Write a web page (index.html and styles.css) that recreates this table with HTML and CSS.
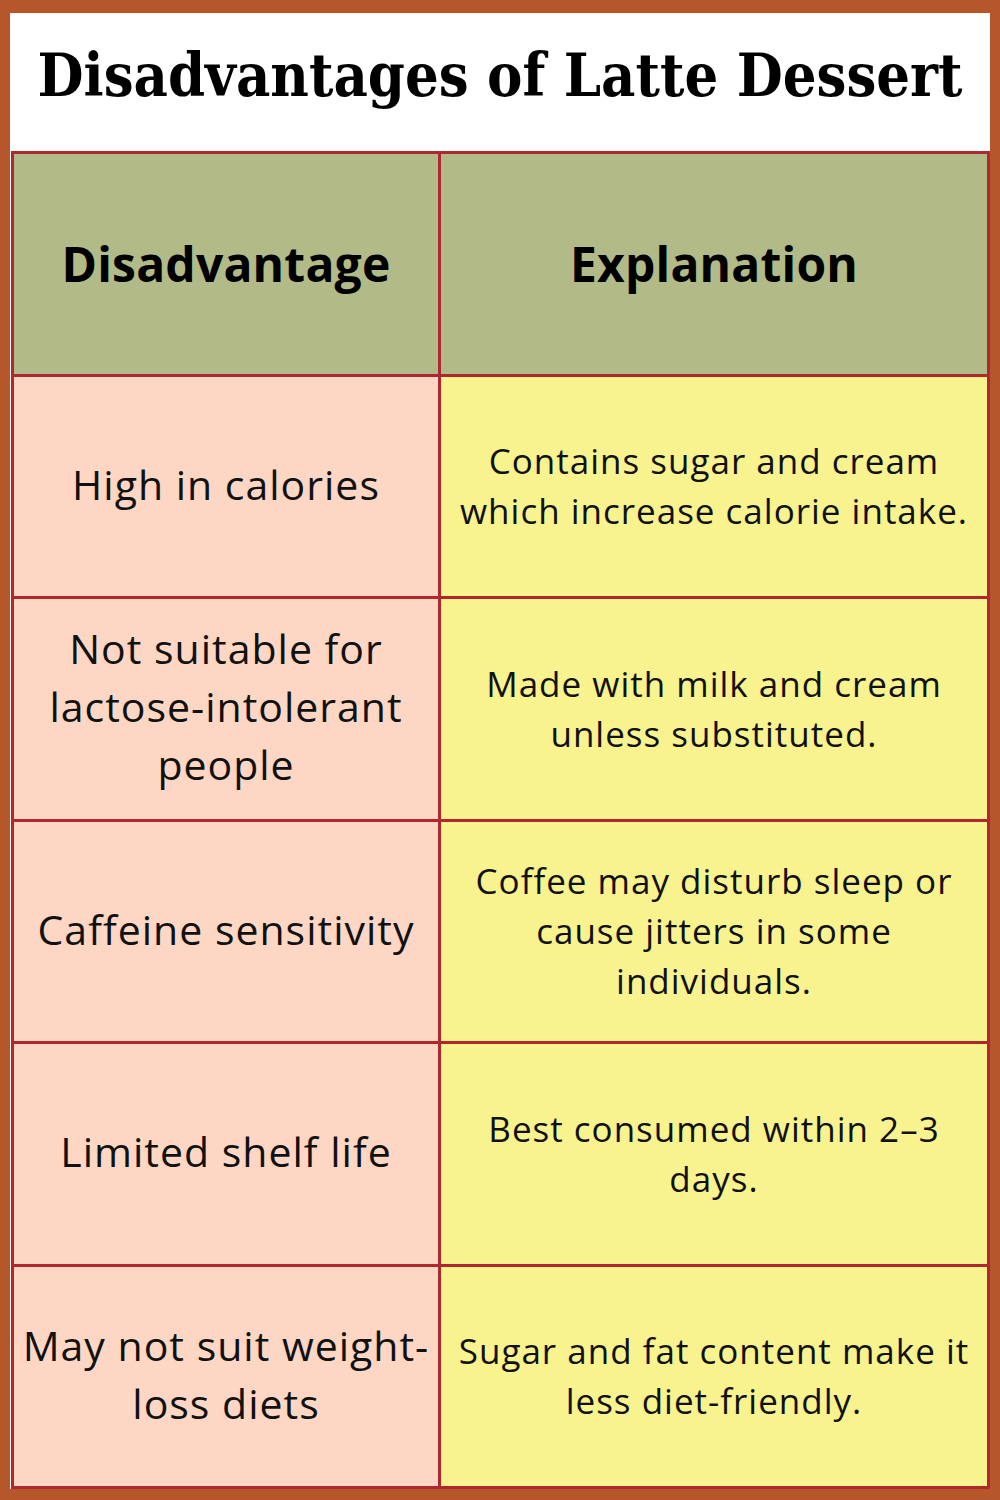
FILE: index.html
```html
<!DOCTYPE html>
<html>
<head>
<meta charset="utf-8">
<link rel="stylesheet" href="styles.css">
</head>
<body>
<div class="frame">
  <div class="sheet">
    <div class="title-wrap"><h1 class="title">Disadvantages of Latte Dessert</h1></div>
    <div class="grid">
      <div class="cell head">Disadvantage</div>
      <div class="cell head">Explanation</div>
      <div class="cell left">High in calories</div>
      <div class="cell right">Contains sugar and cream which increase calorie intake.</div>
      <div class="cell left">Not suitable for lactose-intolerant people</div>
      <div class="cell right">Made with milk and cream unless substituted.</div>
      <div class="cell left">Caffeine sensitivity</div>
      <div class="cell right">Coffee may disturb sleep or cause jitters in some individuals.</div>
      <div class="cell left">Limited shelf life</div>
      <div class="cell right">Best consumed within 2–3 days.</div>
      <div class="cell left">May not suit weight-loss diets</div>
      <div class="cell right">Sugar and fat content make it less diet-friendly.</div>
    </div>
  </div>
</div>
</body>
</html>
```
FILE: styles.css
```css
html, body {
  margin: 0;
  padding: 0;
}
body {
  width: 1000px;
  height: 1500px;
  background: #b5572b;
}
.frame {
  padding: 13px 10px 11px 10px;
  height: 1500px;
  box-sizing: border-box;
}
.sheet {
  background: #ffffff;
  height: 100%;
  display: flex;
  flex-direction: column;
}
.title-wrap {
  height: 138px;
  display: flex;
  align-items: center;
  justify-content: center;
  padding-bottom: 14px;
  box-sizing: border-box;
}
.title {
  margin: 0;
  white-space: nowrap;
  font-family: "DejaVu Serif Condensed", "DejaVu Serif", serif;
  font-stretch: condensed;
  font-weight: bold;
  font-size: 59px;
  line-height: 1;
  letter-spacing: 0;
  color: #000;
}
.grid {
  flex: 1;
  margin-left: 1px;
  display: grid;
  grid-template-columns: 424px 1fr;
  grid-template-rows: repeat(6, 1fr);
  gap: 3px;
  padding: 3px;
  background: #b0282f;
}
.cell {
  display: flex;
  align-items: center;
  justify-content: center;
  text-align: center;
  font-family: "Open Sans", sans-serif;
  color: #111;
}
.head {
  background: #b2bb88;
  font-weight: bold;
  font-size: 48px;
  letter-spacing: 0.2px;
  color: #000;
}
.left {
  background: #fdd7c3;
  font-size: 41px;
  letter-spacing: 1px;
  line-height: 58px;
  padding: 0 2px 5px;
}
.right {
  background: #f8f38f;
  font-size: 35px;
  letter-spacing: 1px;
  line-height: 50px;
  padding: 0 8px;
}
```
